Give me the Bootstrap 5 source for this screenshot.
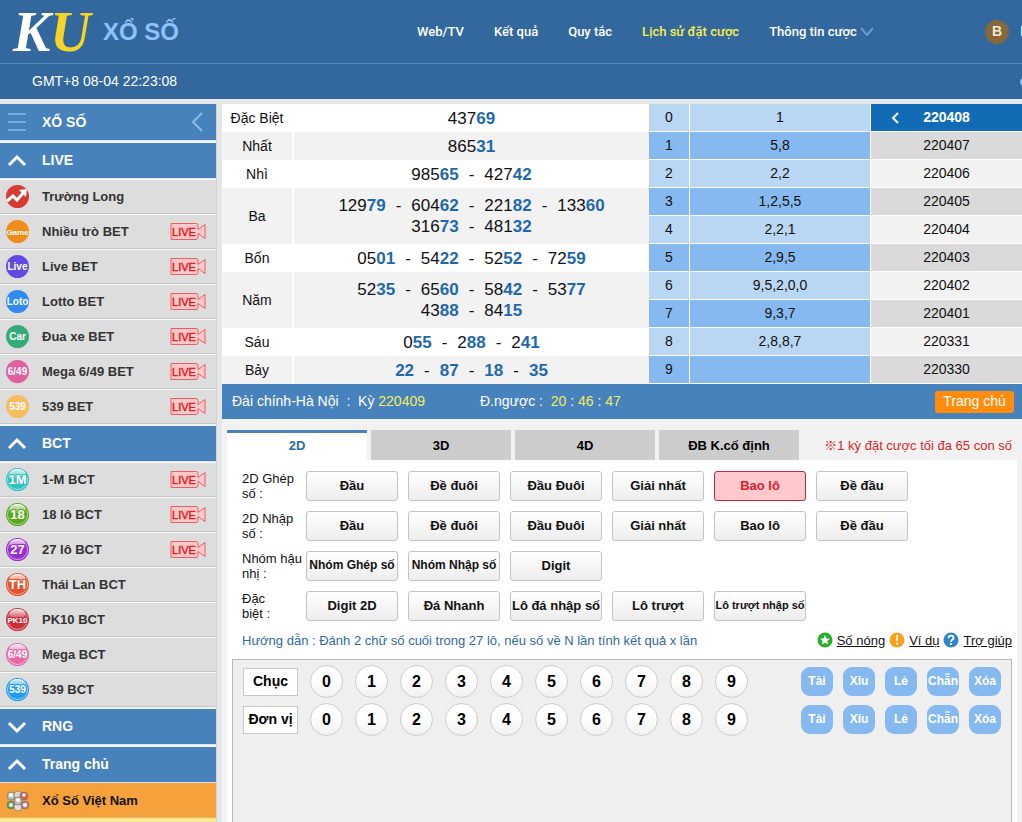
<!DOCTYPE html>
<html lang="vi">
<head>
<meta charset="utf-8">
<meta name="viewport" content="width=device-width, initial-scale=1">
<title>KU Xổ Số</title>
<link href="https://cdn.jsdelivr.net/npm/bootstrap@5.3.0/dist/css/bootstrap.min.css" rel="stylesheet">
<style>
body{font-family:"Liberation Sans","Noto Sans CJK SC",sans-serif;font-size:13px;line-height:15px;color:#111;background:#e4e6e8}
a{color:inherit;text-decoration:none}
.site-head{background:#32689e;color:#fff;height:99px}
.head-top{height:64px;border-bottom:1px solid #5289c5}
.brand{width:417px;padding-left:10px;gap:12px}
.brand svg{overflow:visible}
.brand-name{font-size:24px;line-height:30px;font-weight:bold;color:#8fc1fb}
.main-nav{gap:30px}
.main-nav a{font-family:Roboto,"Liberation Sans",sans-serif;font-size:13px;line-height:18px;font-weight:500}
.main-nav .active{color:#f5ef4a}
.account{width:37px;gap:11px;font-size:14px}
.coin{width:24px;height:24px;background:#86683c;color:#f6ead6;font-weight:bold}
.head-sub{height:35px;padding-left:32px;font-size:14px}
.page-body{padding-top:5px}
.side{width:217px;border-right:1px solid #cfd2d5}
.side-row{height:35px;padding:0 10px 0 5px;background:#ddd;border-top:1px solid #f8f8f8;border-bottom:1px solid #c6c6c6;font-weight:bold;color:#333;gap:12px}
.side-head{height:38px;padding:0 12px 0 5px;background:#4882bd;color:#fff;border:0;border-top:2px solid #f0f5fa;border-bottom:1px solid #dfe5ea;border-radius:0;font-size:14px;font-weight:bold;text-align:left;gap:12px}
.side-head.first{height:37px;border-top:0}
.side-row.current{background:#f5a23c;color:#111;border-color:#f5a23c #e8b56c #e8b56c}
.side-next{background:#ffe793}
.ball{width:25px;height:25px;flex:none}
.ball text{font-size:10px;font-weight:bold;fill:#fff;text-anchor:middle}
.ball .big{font-size:13px}
.ball .tiny{font-size:8px}
.cam{width:36px;height:19px;margin-left:auto;font-weight:normal}
.board{margin-left:5px}
.results{font-size:14px;line-height:21px;text-align:center;background:#fff}
.results tr{height:28px}
.results tr.tall{height:56px}
.results th{width:71px;font-weight:normal;border-right:2px solid #fff;padding:0}
.results td{padding:0;font-size:17px}
.results tr:nth-child(even){background:#f2f2f2}
.results b{color:#1f68ad}
.nums{gap:10px}
.loto{width:222px;font-size:14px;text-align:center;border-collapse:separate;border-spacing:0}
.loto tr{height:28px;background:#b9d6f3}
.loto tr:nth-child(even){background:#86b9ef}
.loto th,.loto td{padding:0;font-weight:normal;border-bottom:1px solid #fff;border-right:1px solid #fff}
.loto th{width:41px}
.dates{width:151px;font-size:14px}
.dates a{height:28px;border-bottom:1px solid #fff;background:#f2f2f2}
.dates a:nth-child(even){background:#dadada}
.dates a.picked{background:#116cb5;color:#fff;font-weight:bold}
.dates svg{left:20px;top:8px}
.info{height:35px;padding:0 8px 0 10px;background:#4882bd;color:#fff;font-size:14px}
.info .left-part{width:248px}
.yel{color:#f1ee5b}
.home-btn{width:79px;height:22px;border:0;border-radius:3px;background:#ff8c0c;color:#fff;font-size:14px;padding:0}
.bet{background:#f2f2f2;padding:11px 5px 0}
.tab-set{gap:4px}
.tab-set button{width:140px;height:30px;border:0;background:#ccc;font-weight:bold;padding:0}
.tab-set .active{background:#fff;color:#2a6ca8;border-top:3px solid #4882bd;padding-bottom:3px}
.limit{color:#d91f26;padding:0 5px 0 0}
.pane{background:#fff;padding:11px 5px 0}
.kinds{padding-left:10px;row-gap:10px}
.kind{gap:10px;height:30px}
.kind .name{width:54px;white-space:nowrap}
.pick{width:92px;height:30px;padding:0 0 2px;border:1px solid #c4c4c4;border-radius:3px;background:linear-gradient(#fff,#ededed);font-weight:bold;color:#111;white-space:nowrap}
.pick.on{background:#ffc9cd;border-color:#c62a40;color:#d8202e}
.pick.mid{font-size:12px}
.pick.low{font-size:11px}
.guide{height:38px;padding-left:10px;color:#31689f}
.tips{color:#111;gap:4px}
.tips a{text-decoration:underline}
.pad{border:1px solid #b9b9b9;border-bottom:0;background:#efefef;padding:5px 10px;row-gap:5px}
.digits{gap:12px}
.place{width:55px;height:28px;border:1px solid #c8c8c8;background:#fff;font-size:14px;font-weight:bold;padding:0}
.num{width:33px;height:33px;border:1px solid #ccc;border-radius:50%;background:linear-gradient(#fff 40%,#f1f1f1);font-size:16px;font-weight:bold;padding:0}
.quick{gap:10px}
.quick button{width:32px;height:29px;border:0;border-radius:9px;background:#86b9ef;color:#fff;font-size:12px;font-weight:bold;padding:0;white-space:nowrap}
</style>
</head>
<body class="d-flex flex-column min-vh-100">
<svg width="0" height="0" class="position-absolute" aria-hidden="true">
  <defs>
    <symbol id="cam" viewBox="0 0 36 19"><path d="M1 1.500h25q2 0 2 2v4l7-5v14l-7-5v4q0 2-2 2H1z" fill="#ffc9c9" stroke="#ef5d62"/><text x="14" y="13.500" font-size="11" text-anchor="middle" fill="#e0141c" stroke="#e0141c" stroke-width=".4">LIVE</text></symbol>
    <symbol id="up" viewBox="0 0 25 16"><path d="M4 12 12 4l8 8" fill="none" stroke="#fff" stroke-width="3"/></symbol>
    <symbol id="down" viewBox="0 0 25 16"><path d="m4 4 8 8 8-8" fill="none" stroke="#fff" stroke-width="3"/></symbol>
    <linearGradient id="gloss" x2="0" y2="1"><stop offset="0" stop-color="#fff" stop-opacity=".85"/><stop offset="1" stop-color="#fff" stop-opacity=".15"/></linearGradient>
    <symbol id="shine" viewBox="0 0 25 25"><circle cx="12.500" cy="12.500" r="10" fill="none" stroke="#fff" stroke-opacity=".55"/><ellipse cx="12.500" cy="7" rx="8" ry="5" fill="url(#gloss)"/></symbol>
  </defs>
</svg>

<header class="site-head overflow-hidden">
  <div class="head-top d-flex align-items-center">
    <a href="#" class="brand d-flex align-items-center flex-shrink-0">
      <svg width="81" height="50" viewBox="0 0 81 50" role="img" aria-label="KU"><text x="3" y="44" fill="#fff" font-family="Liberation Serif,serif" font-style="italic" font-weight="bold" font-size="56">K<tspan fill="#f7d423">U</tspan></text></svg>
      <span class="brand-name">XỔ SỐ</span>
    </a>
    <nav class="main-nav d-flex text-nowrap">
      <a href="#">Web/TV</a><a href="#">Kết quả</a><a href="#">Quy tắc</a><a href="#" class="active">Lịch sử đặt cược</a>
      <a href="#">Thông tin cược <svg width="14" height="10" viewBox="0 0 14 10"><path d="m1 1 6 7 6-7" fill="none" stroke="#6f9dcb" stroke-width="2"/></svg></a>
    </nav>
    <div class="account ms-auto d-flex align-items-center flex-shrink-0"><span class="coin rounded-circle d-flex align-items-center justify-content-center flex-shrink-0">B</span><span>N</span></div>
  </div>
  <div class="head-sub d-flex align-items-center justify-content-between"><time>GMT+8 08-04 22:23:08</time>
    <svg width="3" height="10" viewBox="0 0 3 10"><circle cx="5" cy="5" r="4" fill="#8fc1fb"/></svg></div>
</header>

<div class="page-body d-flex flex-grow-1">
  <aside class="side d-flex flex-column flex-shrink-0">
    <button class="side-head first d-flex align-items-center" type="button"><svg width="25" height="20" viewBox="0 0 25 20"><path d="M3 2h18M3 10h18M3 18h18" stroke="#79aee0" stroke-width="2"/></svg>XỔ SỐ<svg class="ms-auto" width="14" height="20" viewBox="0 0 14 20"><path d="M12 1 3 10l9 9" fill="none" stroke="#8fbce8" stroke-width="2"/></svg></button>
    <button class="side-head d-flex align-items-center" type="button"><svg width="25" height="16"><use href="#up"/></svg>LIVE</button>
    <a href="#" class="side-row d-flex align-items-center"><svg class="ball" viewBox="0 0 25 25"><circle cx="12.500" cy="12.500" r="11.500" fill="#d63a31"/><path d="m2 17 6-5 4 4 7-8" fill="none" stroke="#fff" stroke-width="3"/><path d="m14 6 8-1-1 8z" fill="#fff"/></svg>Trường Long</a>
    <a href="#" class="side-row d-flex align-items-center"><svg class="ball" viewBox="0 0 25 25"><circle cx="12.500" cy="12.500" r="11.500" fill="#f08c1c"/><text x="12.500" y="16" class="tiny">Game</text></svg>Nhiều trò BET<svg class="cam"><use href="#cam"/></svg></a>
    <a href="#" class="side-row d-flex align-items-center"><svg class="ball" viewBox="0 0 25 25"><circle cx="12.500" cy="12.500" r="11.500" fill="#5f4be0"/><text x="12.500" y="16">Live</text></svg>Live BET<svg class="cam"><use href="#cam"/></svg></a>
    <a href="#" class="side-row d-flex align-items-center"><svg class="ball" viewBox="0 0 25 25"><circle cx="12.500" cy="12.500" r="11.500" fill="#2f8cee"/><text x="12.500" y="16">Loto</text></svg>Lotto BET<svg class="cam"><use href="#cam"/></svg></a>
    <a href="#" class="side-row d-flex align-items-center"><svg class="ball" viewBox="0 0 25 25"><circle cx="12.500" cy="12.500" r="11.500" fill="#35ab78"/><text x="12.500" y="16">Car</text></svg>Đua xe BET<svg class="cam"><use href="#cam"/></svg></a>
    <a href="#" class="side-row d-flex align-items-center"><svg class="ball" viewBox="0 0 25 25"><circle cx="12.500" cy="12.500" r="11.500" fill="#e0609f"/><text x="12.500" y="16">6/49</text></svg>Mega 6/49 BET<svg class="cam"><use href="#cam"/></svg></a>
    <a href="#" class="side-row d-flex align-items-center"><svg class="ball" viewBox="0 0 25 25"><circle cx="12.500" cy="12.500" r="11.500" fill="#f5bd60"/><text x="12.500" y="16">539</text></svg>539 BET<svg class="cam"><use href="#cam"/></svg></a>
    <button class="side-head d-flex align-items-center" type="button"><svg width="25" height="16"><use href="#up"/></svg>BCT</button>
    <a href="#" class="side-row d-flex align-items-center"><svg class="ball" viewBox="0 0 25 25"><circle cx="12.500" cy="12.500" r="11.500" fill="#2fc0c0"/><use href="#shine"/><text x="12.500" y="17" class="big" stroke="#2fc0c0" stroke-width="2" paint-order="stroke">1M</text></svg>1-M BCT<svg class="cam"><use href="#cam"/></svg></a>
    <a href="#" class="side-row d-flex align-items-center"><svg class="ball" viewBox="0 0 25 25"><circle cx="12.500" cy="12.500" r="11.500" fill="#57a81c"/><use href="#shine"/><text x="12.500" y="17" class="big" stroke="#57a81c" stroke-width="2" paint-order="stroke">18</text></svg>18 lô BCT<svg class="cam"><use href="#cam"/></svg></a>
    <a href="#" class="side-row d-flex align-items-center"><svg class="ball" viewBox="0 0 25 25"><circle cx="12.500" cy="12.500" r="11.500" fill="#9c2bd0"/><use href="#shine"/><text x="12.500" y="17" class="big" stroke="#9c2bd0" stroke-width="2" paint-order="stroke">27</text></svg>27 lô BCT<svg class="cam"><use href="#cam"/></svg></a>
    <a href="#" class="side-row d-flex align-items-center"><svg class="ball" viewBox="0 0 25 25"><circle cx="12.500" cy="12.500" r="11.500" fill="#e2512c"/><use href="#shine"/><text x="12.500" y="17" class="big" stroke="#e2512c" stroke-width="2" paint-order="stroke">TH</text></svg>Thái Lan BCT</a>
    <a href="#" class="side-row d-flex align-items-center"><svg class="ball" viewBox="0 0 25 25"><circle cx="12.500" cy="12.500" r="11.500" fill="#c9303a"/><use href="#shine"/><text x="12.500" y="16" class="tiny" stroke="#c9303a" stroke-width="2" paint-order="stroke">PK10</text></svg>PK10 BCT</a>
    <a href="#" class="side-row d-flex align-items-center"><svg class="ball" viewBox="0 0 25 25"><circle cx="12.500" cy="12.500" r="11.500" fill="#e468a8"/><use href="#shine"/><text x="12.500" y="16" stroke="#e468a8" stroke-width="2" paint-order="stroke">6/49</text></svg>Mega BCT</a>
    <a href="#" class="side-row d-flex align-items-center"><svg class="ball" viewBox="0 0 25 25"><circle cx="12.500" cy="12.500" r="11.500" fill="#239cf0"/><use href="#shine"/><text x="12.500" y="16" stroke="#239cf0" stroke-width="2" paint-order="stroke">539</text></svg>539 BCT</a>
    <button class="side-head d-flex align-items-center" type="button"><svg width="25" height="16"><use href="#down"/></svg>RNG</button>
    <button class="side-head d-flex align-items-center" type="button"><svg width="25" height="16"><use href="#up"/></svg>Trang chủ</button>
    <a href="#" class="side-row current d-flex align-items-center"><svg class="ball" viewBox="0 0 25 25"><g stroke="#776" stroke-width=".7"><circle cx="6" cy="8" r="4" fill="#bfc0b6"/><circle cx="13" cy="7" r="4" fill="#d9d6d0"/><circle cx="19" cy="8" r="4" fill="#dc5a50"/><circle cx="6" cy="17" r="4" fill="#55a04a"/><circle cx="13" cy="19" r="4" fill="#e0ded8"/><circle cx="20" cy="17" r="4" fill="#c87888"/><circle cx="13" cy="13" r="4" fill="#b9bdb5"/></g><g fill="#fff"><circle cx="6" cy="7" r="2"/><circle cx="13" cy="12" r="2"/><circle cx="19" cy="7" r="1.800"/><circle cx="6" cy="17" r="2"/><circle cx="20" cy="17" r="2"/></g></svg>Xổ Số Việt Nam</a>
    <div class="side-next flex-grow-1"></div>
  </aside>

  <main class="board flex-grow-1 d-flex flex-column">
    <div class="d-flex">
      <div class="flex-grow-1 bg-white">
        <table class="results w-100">
          <tr><th>Đặc Biệt</th><td>437<b>69</b></td></tr>
          <tr><th>Nhất</th><td>865<b>31</b></td></tr>
          <tr><th>Nhì</th><td><div class="nums d-flex justify-content-center"><span>985<b>65</b></span><span>-</span><span>427<b>42</b></span></div></td></tr>
          <tr class="tall"><th>Ba</th><td><div class="nums d-flex justify-content-center"><span>129<b>79</b></span><span>-</span><span>604<b>62</b></span><span>-</span><span>221<b>82</b></span><span>-</span><span>133<b>60</b></span></div><div class="nums d-flex justify-content-center"><span>316<b>73</b></span><span>-</span><span>481<b>32</b></span></div></td></tr>
          <tr><th>Bốn</th><td><div class="nums d-flex justify-content-center"><span>05<b>01</b></span><span>-</span><span>54<b>22</b></span><span>-</span><span>52<b>52</b></span><span>-</span><span>72<b>59</b></span></div></td></tr>
          <tr class="tall"><th>Năm</th><td><div class="nums d-flex justify-content-center"><span>52<b>35</b></span><span>-</span><span>65<b>60</b></span><span>-</span><span>58<b>42</b></span><span>-</span><span>53<b>77</b></span></div><div class="nums d-flex justify-content-center"><span>43<b>88</b></span><span>-</span><span>84<b>15</b></span></div></td></tr>
          <tr><th>Sáu</th><td><div class="nums d-flex justify-content-center"><span>0<b>55</b></span><span>-</span><span>2<b>88</b></span><span>-</span><span>2<b>41</b></span></div></td></tr>
          <tr><th>Bảy</th><td><div class="nums d-flex justify-content-center"><b>22</b><span>-</span><b>87</b><span>-</span><b>18</b><span>-</span><b>35</b></div></td></tr>
        </table>
      </div>
      <table class="loto flex-shrink-0">
        <tr><th>0</th><td>1</td></tr>
        <tr><th>1</th><td>5,8</td></tr>
        <tr><th>2</th><td>2,2</td></tr>
        <tr><th>3</th><td>1,2,5,5</td></tr>
        <tr><th>4</th><td>2,2,1</td></tr>
        <tr><th>5</th><td>2,9,5</td></tr>
        <tr><th>6</th><td>9,5,2,0,0</td></tr>
        <tr><th>7</th><td>9,3,7</td></tr>
        <tr><th>8</th><td>2,8,8,7</td></tr>
        <tr><th>9</th><td></td></tr>
      </table>
      <div class="dates d-flex flex-column flex-shrink-0">
        <a href="#" class="picked position-relative d-flex align-items-center justify-content-center"><svg class="position-absolute" width="9" height="12" viewBox="0 0 9 12"><path d="M7 1 2 6l5 5" fill="none" stroke="#fff" stroke-width="2"/></svg>220408</a>
        <a href="#" class="d-flex align-items-center justify-content-center">220407</a>
        <a href="#" class="d-flex align-items-center justify-content-center">220406</a>
        <a href="#" class="d-flex align-items-center justify-content-center">220405</a>
        <a href="#" class="d-flex align-items-center justify-content-center">220404</a>
        <a href="#" class="d-flex align-items-center justify-content-center">220403</a>
        <a href="#" class="d-flex align-items-center justify-content-center">220402</a>
        <a href="#" class="d-flex align-items-center justify-content-center">220401</a>
        <a href="#" class="d-flex align-items-center justify-content-center">220331</a>
        <a href="#" class="d-flex align-items-center justify-content-center">220330</a>
      </div>
    </div>

    <div class="info d-flex align-items-center">
      <div class="left-part">Đài chính-Hà Nội &nbsp;:&nbsp; Kỳ <span class="yel">220409</span></div>
      <div>Đ.ngược : &nbsp;<span class="yel">20</span> : <span class="yel">46</span> : <span class="yel">47</span></div>
      <button class="home-btn ms-auto" type="button">Trang chủ</button>
    </div>

    <section class="bet flex-grow-1 d-flex flex-column">
      <div class="d-flex align-items-center">
        <div class="tab-set d-flex" role="tablist">
          <button type="button" role="tab" class="active">2D</button><button type="button" role="tab">3D</button><button type="button" role="tab">4D</button><button type="button" role="tab">ĐB K.cố định</button>
        </div>
        <span class="limit ms-auto text-nowrap">※1 kỳ đặt cược tối đa 65 con số</span>
      </div>
      <div class="pane flex-grow-1 d-flex flex-column">
        <div class="kinds d-flex flex-column">
          <div class="kind d-flex align-items-center"><span class="name">2D Ghép<br>số :</span><button type="button" class="pick">Đầu</button><button type="button" class="pick">Đề đuôi</button><button type="button" class="pick">Đầu Đuôi</button><button type="button" class="pick">Giải nhất</button><button type="button" class="pick on">Bao lô</button><button type="button" class="pick">Đề đầu</button></div>
          <div class="kind d-flex align-items-center"><span class="name">2D Nhập<br>số :</span><button type="button" class="pick">Đầu</button><button type="button" class="pick">Đề đuôi</button><button type="button" class="pick">Đầu Đuôi</button><button type="button" class="pick">Giải nhất</button><button type="button" class="pick">Bao lô</button><button type="button" class="pick">Đề đầu</button></div>
          <div class="kind d-flex align-items-center"><span class="name">Nhóm hậu<br>nhị :</span><button type="button" class="pick mid">Nhóm Ghép số</button><button type="button" class="pick mid">Nhóm Nhập số</button><button type="button" class="pick">Digit</button></div>
          <div class="kind d-flex align-items-center"><span class="name">Đặc<br>biệt :</span><button type="button" class="pick">Digit 2D</button><button type="button" class="pick">Đá Nhanh</button><button type="button" class="pick">Lô đá nhập số</button><button type="button" class="pick">Lô trượt</button><button type="button" class="pick low">Lô trượt nhập số</button></div>
        </div>
        <div class="guide d-flex align-items-center">
          <span>Hướng dẫn : Đánh 2 chữ số cuối trong 27 lô, nếu số về N lần tính kết quả x lần</span>
          <div class="tips ms-auto d-flex align-items-center">
            <svg width="16" height="16" viewBox="0 0 16 16"><circle cx="8" cy="8" r="7.500" fill="#2aae2e"/><path d="m8 3 1.500 3.500 3.500.2-2.700 2.300 1 3.600L8 10.700l-3.300 1.900 1-3.600L3 6.700l3.500-.2z" fill="#fff"/></svg><a href="#">Số nóng</a>
            <svg width="16" height="16" viewBox="0 0 16 16"><circle cx="8" cy="8" r="7.500" fill="#f9a01c"/><path d="M7 3h2l-.3 6H7.300zM7 10.500h2v2H7z" fill="#fff"/></svg><a href="#">Ví dụ</a>
            <svg width="16" height="16" viewBox="0 0 16 16"><circle cx="8" cy="8" r="7.500" fill="#2d86c8"/><path d="M5.500 6.200q0-2.500 2.500-2.500t2.500 2.200q0 1.200-1.300 1.900T8 9.700" fill="none" stroke="#fff" stroke-width="1.800"/><path d="M7 11h2v2H7z" fill="#fff"/></svg><a href="#">Trợ giúp</a>
          </div>
        </div>
        <div class="pad flex-grow-1 d-flex flex-column">
          <div class="digits d-flex align-items-center"><button type="button" class="place">Chục</button><button type="button" class="num">0</button><button type="button" class="num">1</button><button type="button" class="num">2</button><button type="button" class="num">3</button><button type="button" class="num">4</button><button type="button" class="num">5</button><button type="button" class="num">6</button><button type="button" class="num">7</button><button type="button" class="num">8</button><button type="button" class="num">9</button>
            <div class="quick d-flex ms-auto"><button type="button">Tài</button><button type="button">Xỉu</button><button type="button">Lẻ</button><button type="button">Chẵn</button><button type="button">Xóa</button></div></div>
          <div class="digits d-flex align-items-center"><button type="button" class="place">Đơn vị</button><button type="button" class="num">0</button><button type="button" class="num">1</button><button type="button" class="num">2</button><button type="button" class="num">3</button><button type="button" class="num">4</button><button type="button" class="num">5</button><button type="button" class="num">6</button><button type="button" class="num">7</button><button type="button" class="num">8</button><button type="button" class="num">9</button>
            <div class="quick d-flex ms-auto"><button type="button">Tài</button><button type="button">Xỉu</button><button type="button">Lẻ</button><button type="button">Chẵn</button><button type="button">Xóa</button></div></div>
        </div>
      </div>
    </section>
  </main>
</div>
<script src="https://cdn.jsdelivr.net/npm/bootstrap@5.3.0/dist/js/bootstrap.bundle.min.js"></script>
</body>
</html>
